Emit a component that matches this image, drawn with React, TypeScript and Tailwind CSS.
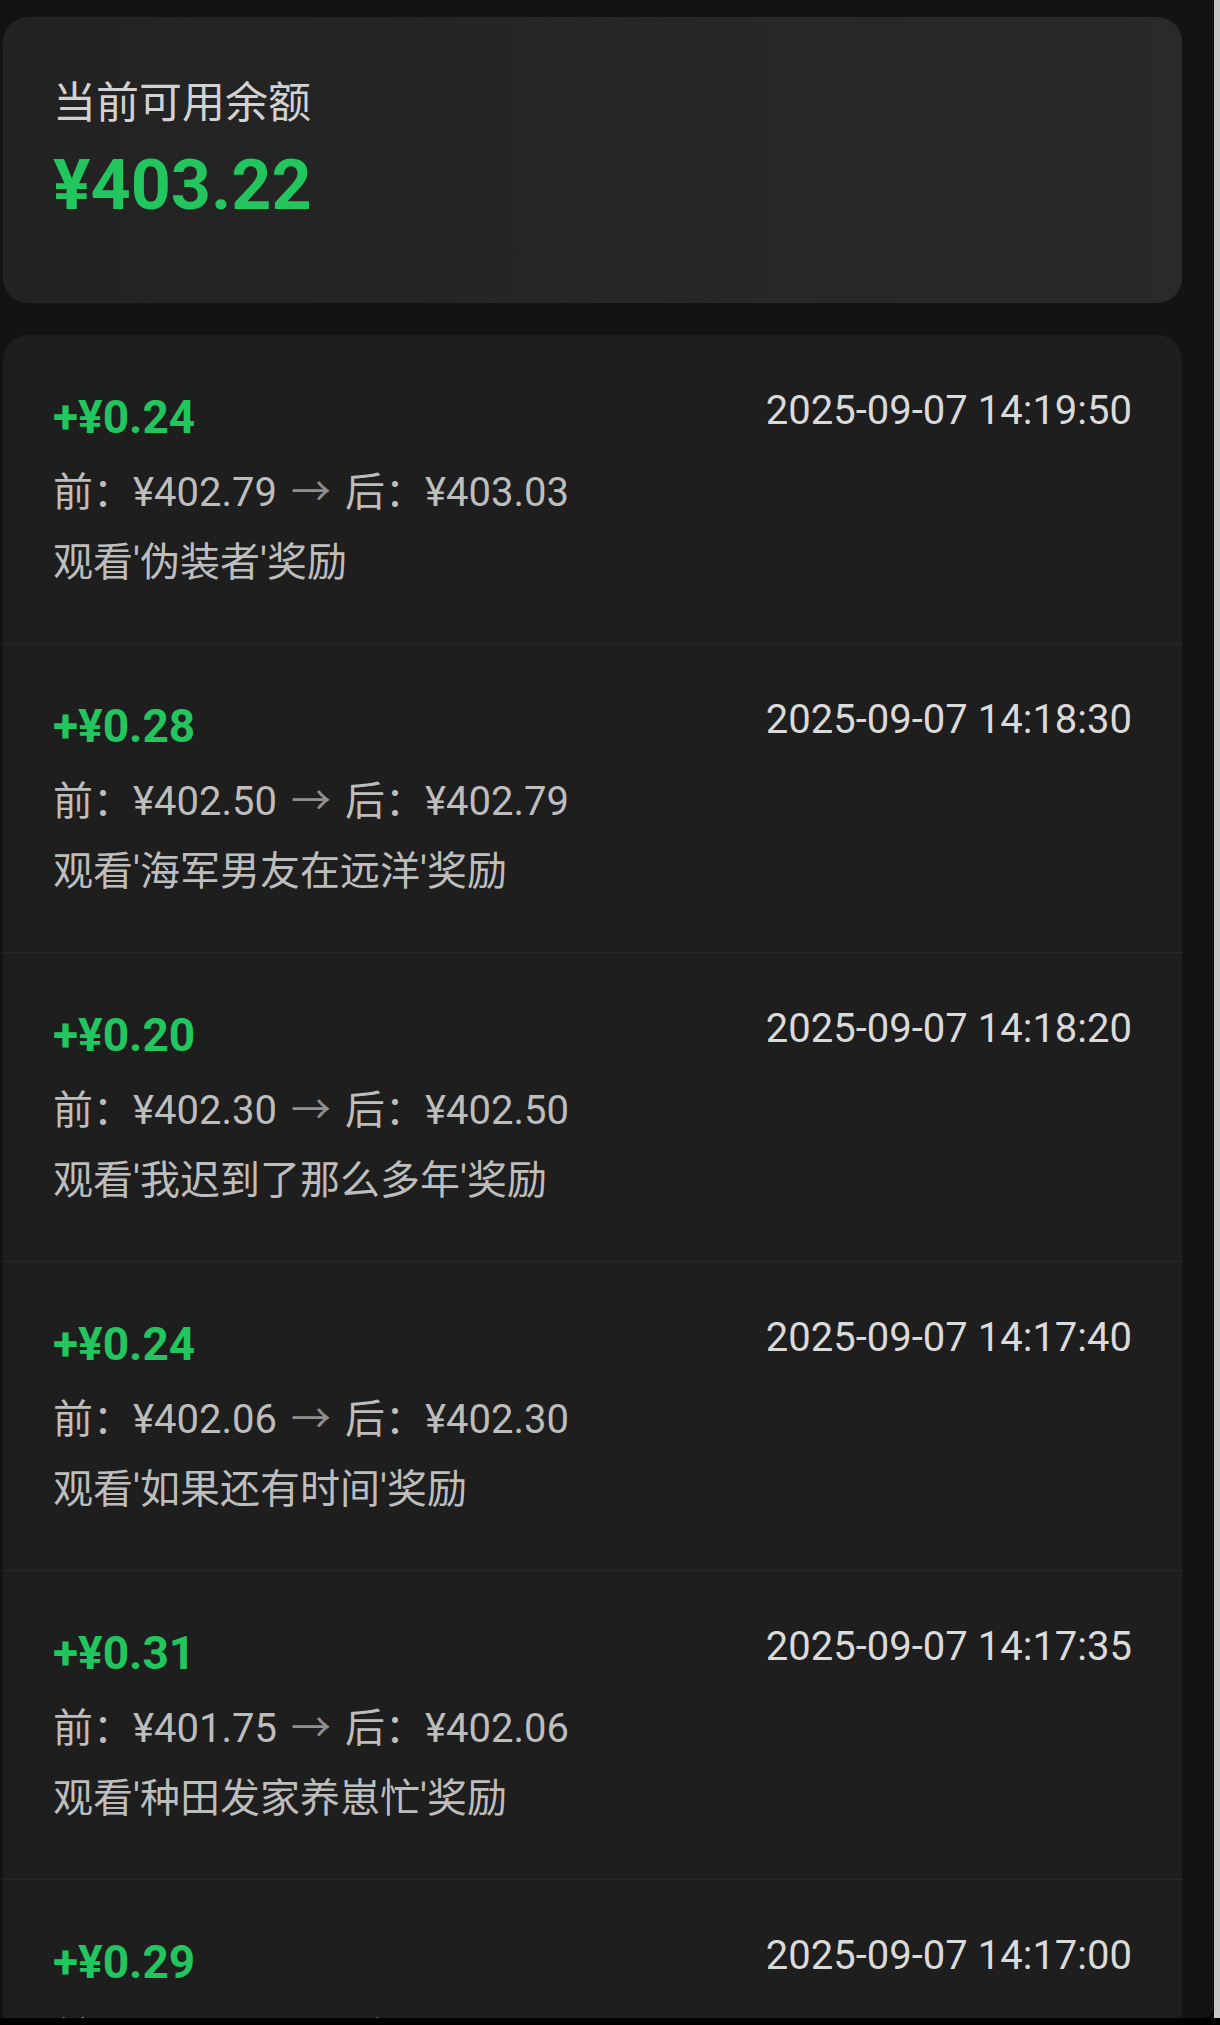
const rows = [
  { amount: "+¥0.24", time: "2025-09-07 14:19:50", before: "¥402.79", after: "¥403.03", title: "伪装者" },
  { amount: "+¥0.28", time: "2025-09-07 14:18:30", before: "¥402.50", after: "¥402.79", title: "海军男友在远洋" },
  { amount: "+¥0.20", time: "2025-09-07 14:18:20", before: "¥402.30", after: "¥402.50", title: "我迟到了那么多年" },
  { amount: "+¥0.24", time: "2025-09-07 14:17:40", before: "¥402.06", after: "¥402.30", title: "如果还有时间" },
  { amount: "+¥0.31", time: "2025-09-07 14:17:35", before: "¥401.75", after: "¥402.06", title: "种田发家养崽忙" },
  { amount: "+¥0.29", time: "2025-09-07 14:17:00", before: "¥401.46", after: "¥401.75", title: "闪婚后大佬每天都在" }
];

const font = "font-['Roboto','Noto_Sans_CJK_SC',sans-serif]";

export default function App() {
  return (
    <div className={`h-[2025px] w-[1220px] overflow-hidden bg-black ${font}`}>
      <div className="flex h-[2018px] w-[1220px]">
        <main className="h-full w-[1214px] overflow-hidden rounded-br-[10px] bg-[#131313] pl-[3px] pt-[17px]">
          {/* balance */}
          <section className="h-[286px] w-[1179px] rounded-[25px] bg-linear-to-r from-[#222222] to-[#2a2a2a] px-[50px] pt-[61px]">
            <div className="text-[43px] leading-[50px] text-[#d2d2d2]">当前可用余额</div>
            <div className="mt-[17px] text-[70px] font-bold leading-[80px] text-[#22c55e]">¥403.22</div>
          </section>

          {/* history */}
          <section className="mt-[32px] w-[1179px] overflow-hidden rounded-t-[25px] bg-[#1e1e1e]">
            {rows.map((r, i) => (
              <div key={i} className="border-b border-[#292929] px-[50px] pb-[45px] pt-[54px]">
                <div className="flex items-start justify-between">
                  <span className="text-[46px] font-bold leading-[56px] text-[#22c55e]">{r.amount}</span>
                  <span className="text-[40px] leading-[44px] text-[#dadada]">{r.time}</span>
                </div>
                <div className="mt-[13px] text-[40px] leading-[70px] text-[#bdbdbd]">
                  <div>
                    前：{r.before}
                    <span className="mx-[14px] text-[#8f8f8f]">→</span>
                    后：{r.after}
                  </div>
                  <div>观看'{r.title}'奖励</div>
                </div>
              </div>
            ))}
          </section>
        </main>
        <div className="h-full flex-1 bg-[#c8c8c8]" />
      </div>
    </div>
  );
}
